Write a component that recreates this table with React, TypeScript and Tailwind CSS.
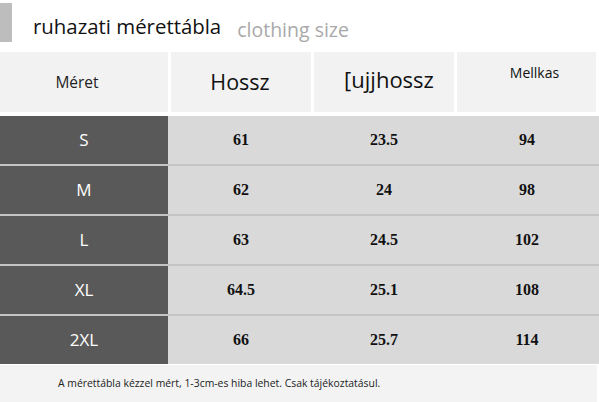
const rows = [
  ["S", "61", "23.5", "94"],
  ["M", "62", "24", "98"],
  ["L", "63", "24.5", "102"],
  ["XL", "64.5", "25.1", "108"],
  ["2XL", "66", "25.7", "114"],
];

export default function App() {
  return (
    <div className="relative w-[599px] h-[402px] overflow-hidden bg-white font-['Open_Sans','Noto_Sans',sans-serif]">
      {/* title */}
      <div className="flex h-[52px] items-start">
        <div className="mt-[3px] h-[39px] w-[12px] bg-[#bdbdbd]" />
        <div className="ml-[21px] mt-[12px] text-[20.4px] leading-[28px] text-[#111]">ruhazati mérettábla</div>
        <div className="ml-[16px] mt-[16px] text-[19.5px] leading-[28px] text-[#a9a9a9]">clothing size</div>
      </div>

      {/* header */}
      <div className="grid h-[60px] grid-cols-[168px_140px_140px_139px] gap-x-[3px]">
        <div className="flex items-center justify-center bg-[#f2f2f2] pt-[1px] pr-[14px] text-[15.5px] text-[#222]">Méret</div>
        <div className="flex items-center justify-center bg-[#f2f2f2] pr-[2px] text-[21.5px] text-[#111]">Hossz</div>
        <div className="flex items-center justify-center bg-[#f2f2f2] pb-[6px] pl-[10px] text-[22px] text-[#111]">[ujjhossz</div>
        <div className="flex items-start justify-center bg-[#f2f2f2] pt-[10px] pl-[16px] text-[14px] text-[#111]">Mellkas</div>
      </div>

      {/* body */}
      <div className="mt-[4px] flex flex-col">
        {rows.map((r, i) => (
          <div
            key={r[0]}
            className={
              i === 0
                ? "flex h-[48px]"
                : "flex h-[50px] border-t-2 border-[#c4c4c4]"
            }
          >
            <div className="flex w-[168px] items-center justify-center bg-[#595959] text-[17px] text-white">
              {r[0]}
            </div>
            <div className="flex flex-1 bg-[#d9d9d9] pl-[3px] font-['Liberation_Serif',serif] text-[16px] font-bold text-[#111]">
              <div className="flex w-[140px] items-center justify-center">{r[1]}</div>
              <div className="ml-[3px] flex w-[140px] items-center justify-center">{r[2]}</div>
              <div className="ml-[3px] flex w-[140px] items-center justify-center">{r[3]}</div>
            </div>
          </div>
        ))}
      </div>

      {/* footer */}
      <div className="mt-[1px] flex h-[37px] w-[597px] items-center bg-[#f3f3f3] pl-[58px] text-[10.4px] text-[#222]">
        A mérettábla kézzel mért, 1-3cm-es hiba lehet. Csak tájékoztatásul.
      </div>
    </div>
  );
}
